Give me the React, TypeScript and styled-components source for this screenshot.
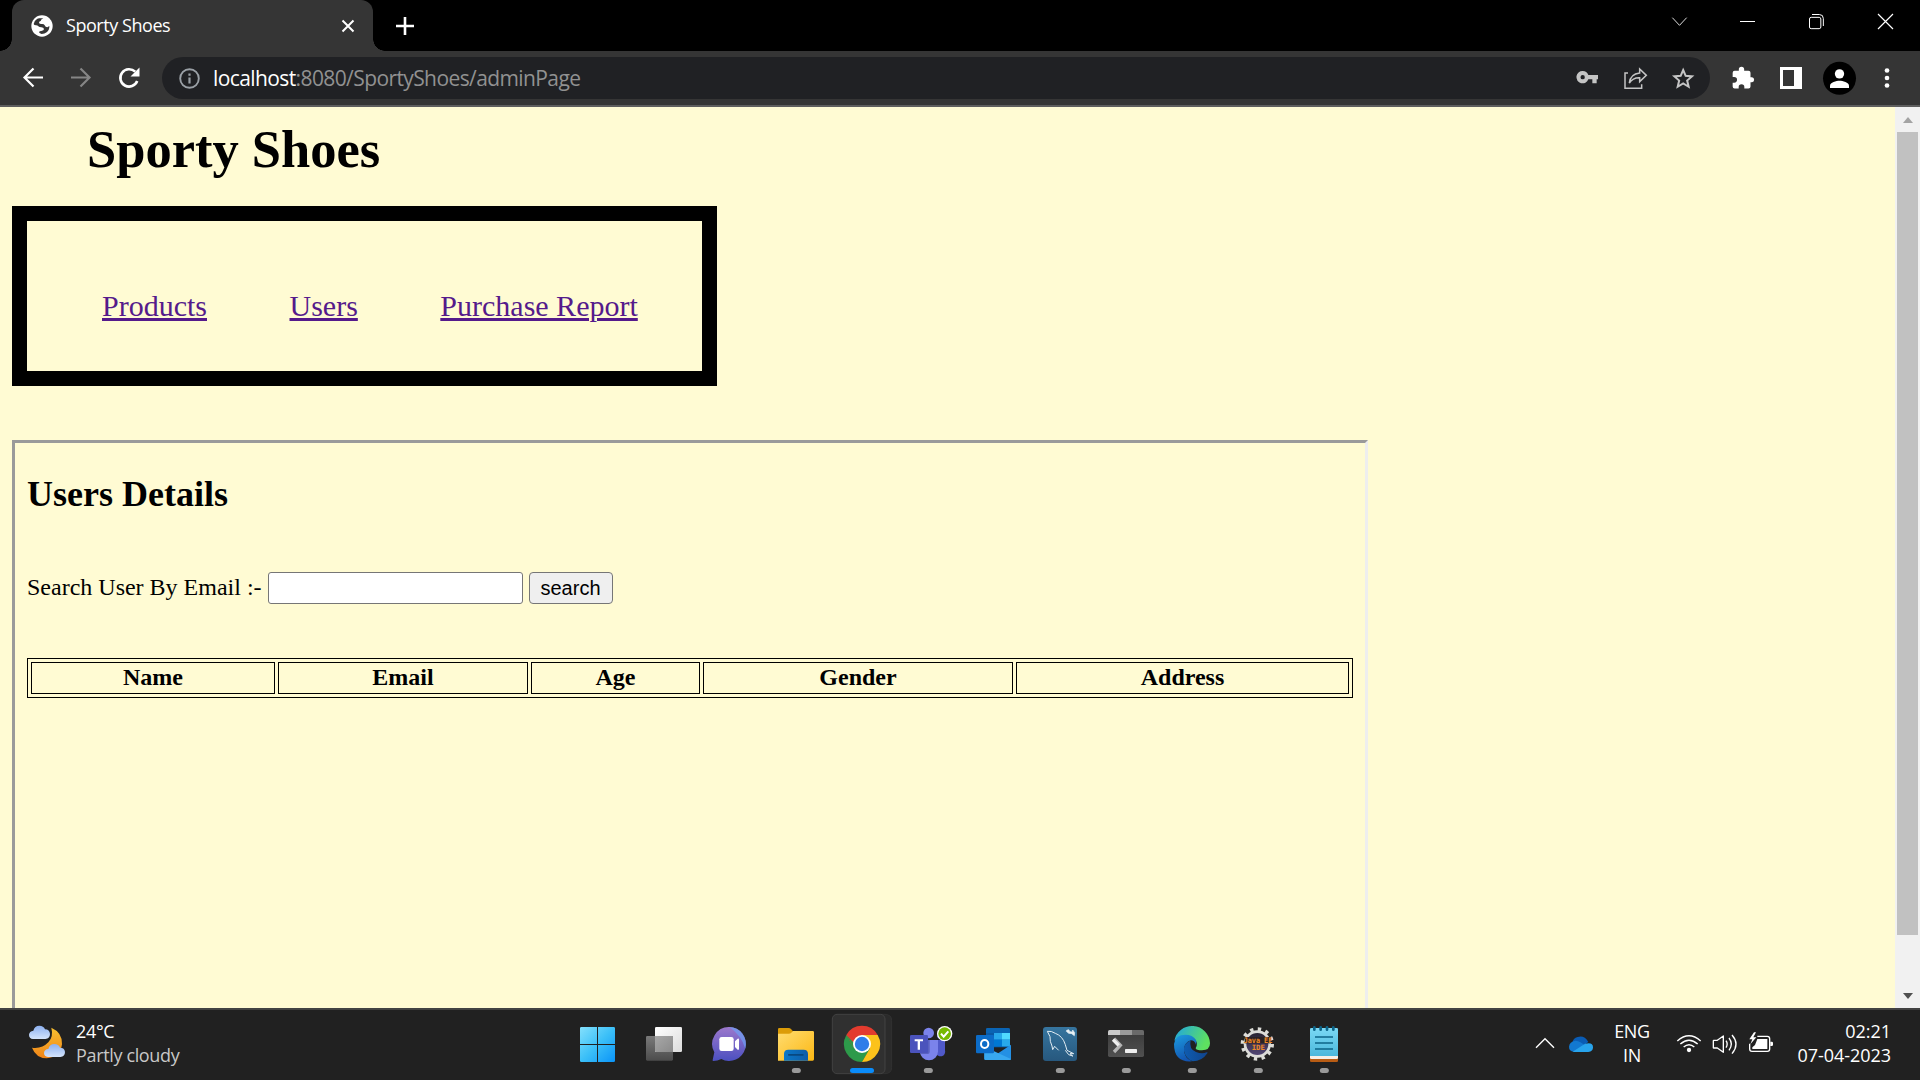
import React from "react";
import styled, { createGlobalStyle, css } from "styled-components";

const ui = `"Open Sans", "Noto Sans", sans-serif`;
const serif = `"Liberation Serif", "Times New Roman", serif`;

const GlobalStyle = createGlobalStyle`
  * { box-sizing: border-box; }
  body { margin: 0; background: #000; overflow: hidden; }
  svg { display: block; flex: none; }
`;

const Screen = styled.div`
  width: 1920px;
  height: 1080px;
  display: flex;
  flex-direction: column;
  overflow: hidden;
`;

/* ---------- Browser chrome ---------- */

const TabStrip = styled.header`
  height: 51px;
  flex: none;
  display: flex;
  background: #000;
  padding-left: 12px;
`;

const Tab = styled.div`
  position: relative;
  width: 361px;
  height: 51px;
  display: flex;
  align-items: center;
  padding: 0 13px 0 19px;
  background: #353535;
  border-radius: 12px 12px 0 0;
  &::before,
  &::after {
    content: "";
    position: absolute;
    bottom: 0;
    width: 12px;
    height: 12px;
  }
  &::before {
    left: -12px;
    background: radial-gradient(circle at 0 0, transparent 11.5px, #353535 12px);
  }
  &::after {
    right: -12px;
    background: radial-gradient(circle at 100% 0, transparent 11.5px, #353535 12px);
  }
`;

const TabTitle = styled.span`
  flex: 1;
  margin-left: 13px;
  padding-bottom: 1px;
  font: 18px/24px ${ui};
  letter-spacing: -0.45px;
  color: #fff;
`;

const NewTab = styled.div`
  width: 64px;
  display: flex;
  align-items: center;
  justify-content: center;
`;

const WindowControls = styled.div`
  margin-left: auto;
  display: flex;
`;

const Toolbar = styled.nav`
  height: 56px;
  flex: none;
  display: flex;
  align-items: flex-start;
  padding: 0 9px;
  background: #353535;
  border-bottom: 2px solid #5e5e5e;
`;

const Omnibox = styled.div`
  flex: 1;
  height: 42px;
  margin: 6px 9px 0 9px;
  padding: 0 3px 0 17px;
  display: flex;
  align-items: center;
  overflow: hidden;
  border-radius: 21px;
  background: #202124;
`;

const Url = styled.span`
  flex: 1;
  margin-left: 13px;
  font: 21px/28px ${ui};
  letter-spacing: -0.6px;
  color: #919191;
  b {
    font-weight: 400;
    color: #fff;
  }
`;

/* ---------- Page ---------- */

const Viewport = styled.div`
  height: 901px;
  flex: none;
  display: flex;
  overflow: hidden;
  background: #fffbd3;
`;

const Page = styled.main`
  flex: 1;
  padding: 12px 12px 0;
  font-family: ${serif};
  color: #000;
`;

const Title = styled.h1`
  margin: 0 0 27px 75px;
  font-size: 52.5px;
  line-height: 60px;
`;

const Menu = styled.div`
  width: 705px;
  height: 180px;
  border: 15px solid #000;
  padding: 67px 0 0 75px;
  display: flex;
  gap: 82.5px;
`;

const MenuLink = styled.a`
  font-size: 30px;
  line-height: 36px;
  color: #551a8b;
  text-decoration: underline;
  text-decoration-thickness: 3px;
  text-underline-offset: 2px;
`;

const Frame = styled.section`
  width: 1356px;
  height: 700px;
  margin-top: 54px;
  padding: 30px 12px 0;
  border: 3px solid;
  border-color: #9a9a9a #eee #eee #9a9a9a;
`;

const SubTitle = styled.h2`
  margin: 0;
  font-size: 36px;
  line-height: 42px;
`;

const SearchRow = styled.form`
  margin-top: 57px;
  height: 32px;
  display: flex;
  align-items: flex-start;
  gap: 6px;
`;

const Label = styled.label`
  width: 235px;
  font-size: 24px;
  line-height: 30px;
  white-space: nowrap;
`;

const Input = styled.input`
  width: 255px;
  height: 32px;
  padding: 0 3px;
  border: 1px solid #767676;
  border-radius: 3px;
  background: #fff;
  outline: none;
`;

const Button = styled.button`
  width: 84px;
  height: 32px;
  padding: 0 1px 1px 0;
  border: 1px solid #767676;
  border-radius: 4px;
  background: #efefef;
  color: #000;
  font: 20px/28px "Liberation Sans", Arial, sans-serif;
`;

const Table = styled.table`
  width: 1326px;
  height: 40px;
  margin-top: 54px;
  table-layout: fixed;
  border: 1px solid #000;
  border-spacing: 3px;
`;

const Th = styled.th<{ $w: number }>`
  width: ${(p) => p.$w}px;
  height: 32px;
  padding: 0 0 2px;
  border: 1px solid #000;
  font-size: 24px;
  line-height: 28px;
`;

const Scrollbar = styled.aside`
  width: 25px;
  display: flex;
  flex-direction: column;
  align-items: center;
  background: #f1f1f1;
`;

const Thumb = styled.div`
  width: 21px;
  height: 803px;
  background: #c1c1c1;
`;

const Arrow = styled.div<{ $down?: boolean }>`
  width: 0;
  height: 0;
  border: 5.5px solid transparent;
  ${(p) =>
    p.$down
      ? css`
          margin-top: 58px;
          border-top: 6px solid #505050;
          border-bottom: 0;
        `
      : css`
          margin: 10px 0 9px;
          border-bottom: 6px solid #a3a3a3;
          border-top: 0;
        `}
`;

/* ---------- Taskbar ---------- */

const Taskbar = styled.footer`
  flex: 1;
  display: flex;
  background: #212121;
  border-top: 2px solid #424242;
`;

const Weather = styled.div`
  width: 565px;
  display: flex;
  padding-left: 25px;
`;

const Lines = styled.div<{ $align?: string; $w?: number; $ml?: number; $sp?: number }>`
  width: ${(p) => (p.$w ? `${p.$w}px` : "auto")};
  margin-left: ${(p) => p.$ml ?? 0}px;
  padding-top: 9px;
  display: flex;
  flex-direction: column;
  text-align: ${(p) => p.$align ?? "left"};
  white-space: nowrap;
  font: 18px/24px ${ui};
  letter-spacing: ${(p) => p.$sp ?? -0.35}px;
  color: #fff;
`;

const Muted = styled.span`
  color: #c8c8c8;
`;

const Apps = styled.div`
  display: flex;
  width: 792px;
`;

const Tray = styled.div`
  flex: 1;
  display: flex;
  padding: 0 29px 0 173px;
`;

const TrayIcons = styled.div`
  display: flex;
  gap: 4px;
  margin-left: 6px;
`;

type BoxProps = { x: number; y?: number; w?: number; h?: number; children: React.ReactNode };

/* Icons are drawn on a grid of three units per pixel. */
const Glyph = ({ x, y = 30, w = 198, h = 210, children }: BoxProps) => (
  <svg width={w / 3} height={h / 3} viewBox={`${x} ${y} ${w} ${h}`} fill="none">
    {children}
  </svg>
);

const Running = ({ cx }: { cx: number }) => (
  <rect x={cx - 13.5} y="204" width="27" height="15" rx="7.5" fill="#9a9a9a" />
);

const gradient = (id: string, a: string, b: string, x2 = 0, y2 = 1) => (
  <linearGradient id={id} x1="0" y1="0" x2={x2} y2={y2}>
    <stop stopColor={a} />
    <stop offset="1" stopColor={b} />
  </linearGradient>
);

const TaskIcons = () => (
  <Apps>
    <Glyph x={15}>
      <defs>
        <linearGradient id="win" gradientUnits="userSpaceOnUse" x1="60" y1="81" x2="165" y2="186">
          <stop stopColor="#84e0fc" />
          <stop offset=".5" stopColor="#3cc0f8" />
          <stop offset="1" stopColor="#0a94f8" />
        </linearGradient>
      </defs>
      <path
        fill="url(#win)"
        d="M64 81h47v51H60V85q0-4 4-4zM114 81h47q4 0 4 4v47h-51zM60 135h51v51H64q-4 0-4-4zM114 135h51v47q0 4-4 4h-47z"
      />
    </Glyph>
    <Glyph x={213}>
      <defs>
        {gradient("tv1", "#ffffff", "#dcdcdc", 1)}
        {gradient("tv2", "#7a7a7a", "#4c4c4c")}
        {gradient("tv3", "#a8a8a8", "#8a8a8a", 1)}
      </defs>
      <rect x="258" y="108" width="81" height="74" rx="4" fill="url(#tv2)" />
      <rect x="285" y="81" width="81" height="75" rx="4" fill="url(#tv1)" />
      <path d="M285 108h54v48h-50q-4 0-4-4z" fill="url(#tv3)" />
    </Glyph>
    <Glyph x={411}>
      <defs>{gradient("chat", "#9c78cc", "#4c50c0")}</defs>
      <path d="M508 81a50 51 0 1 1-24 96q-12 6-24 6-3 0-2-3l5-23a50 51 0 0 1 45-76z" fill="url(#chat)" />
      <path d="M508 81a50 51 0 0 1 48 65q-12-40-48-65z" fill="#6f9cf0" opacity=".75" />
      <rect x="478" y="111" width="43" height="42" rx="7" fill="#fff" />
      <path d="M525 124l8-8q4-2 4 3v27q0 5-4 3l-8-8z" fill="#fff" />
    </Glyph>
    <Glyph x={609}>
      <defs>
        {gradient("fold", "#ffdc70", "#fcb814", 1)}
        {gradient("fold2", "#0a78c8", "#0f5ca8", 1, 0)}
      </defs>
      <path d="M654 88q0-4 4-4h28q4 0 7 3l6 7v14h-45z" fill="#dc9c08" />
      <path d="M654 101h32q5 0 8-3l5-5h59q4 0 4 4v81q0 4-4 4H654z" fill="url(#fold)" />
      <path d="M672 182v-20q0-13 13-13h46q13 0 13 13v20z" fill="url(#fold2)" />
      <rect x="684" y="162" width="47" height="5" rx="2" fill="#084880" />
      <Running cx={709} />
    </Glyph>
    <Glyph x={807}>
      <path d="M960 43h15q20 1 20 18v142q0 17-20 18h-15z" fill="#2b2b2b" stroke="#363636" strokeWidth="2" />
      <rect x="817" y="43" width="158" height="178" rx="14" fill="#303030" stroke="#424242" strokeWidth="3" />
      <path d="M906 132L859.2 105A54 54 0 0 0 906 186l24-40z" fill="#2d9a4a" />
      <path d="M906 105h47A54 54 0 0 1 906 186l24-41z" fill="#fcc21b" />
      <path d="M859 105A54 54 0 0 1 953 105H906l-24 40z" fill="#e33b2e" />
      <path d="M859 105l24 41 10-5z" fill="#2d9a4a" />
      <circle cx="906" cy="132" r="27" fill="#fff" />
      <circle cx="906" cy="132" r="21.5" fill="#2f7de9" />
      <rect x="870" y="204" width="72" height="15" rx="7.5" fill="#0a8cfa" />
    </Glyph>
    <Glyph x={1005}>
      <circle cx="1106" cy="99" r="16" fill="#7b83eb" />
      <circle cx="1143" cy="105" r="12" fill="#5059c9" />
      <path d="M1128 120h27v31a14 14 0 0 1-27 8z" fill="#5059c9" />
      <path d="M1080 120h54v34a27 27 0 0 1-54 0z" fill="#7b83eb" />
      <path d="M1080 120h29v36q0 6-6 6h-22z" fill="#5a62c0" />
      <rect x="1050" y="105" width="54" height="54" rx="4" fill="#4b53bc" />
      <path d="M1064 118h25v6h-9v25h-7v-25h-9z" fill="#fff" />
      <circle cx="1154" cy="101" r="23" fill="#fff" />
      <circle cx="1154" cy="101" r="19" fill="#76b900" />
      <path d="M1143 101l8 9 14-16" stroke="#fff" strokeWidth="6" />
      <Running cx={1105} />
    </Glyph>
    <Glyph x={33}>
      <path d="M108 88q0-4 4-4h63q5 0 5 4v54h-72z" fill="#0a64b4" />
      <path d="M132 99h24v20h-24z" fill="#28a8ea" />
      <path d="M156 99h24v20h-24z" fill="#50d9ff" />
      <path d="M132 119h24v20h-24z" fill="#0078d4" />
      <path d="M156 119h24v20h-24z" fill="#28a8ea" />
      <path d="M108 99h24v40h-24z" fill="#0a5aa5" />
      <path d="M103 140l38 22 42-28v42q0 4-4 4h-72q-4 0-4-4z" fill="#2490e4" />
      <path d="M103 140v36q0 4 4 4h72q3 0 4-3z" fill="#38a8f0" />
      <rect x="78" y="105" width="54" height="55" rx="4" fill="#0c6cc8" />
      <ellipse cx="104" cy="132" rx="11" ry="12" stroke="#fff" strokeWidth="6" />
    </Glyph>
    <Glyph x={231}>
      <defs>{gradient("sql", "#36759f", "#27587e")}</defs>
      <rect x="279" y="81" width="102" height="102" rx="9" fill="url(#sql)" />
      <path
        d="M292 94q12-2 24 6 22 8 30 34l5 17 20 10-11 0 9 8M292 94l8 16q-1 14 6 28l2 11 6-10 12 12M346 151l10 13 12 4"
        stroke="#e4eef4"
        strokeWidth="3"
      />
      <path d="M350 91l6-2 4 6 7 1 1-6 6 8-1 9-8-6-9-1-7-6z" fill="#e8f0f4" stroke="#e8f0f4" strokeWidth="2" />
      <Running cx={331} />
    </Glyph>
    <Glyph x={429}>
      <defs>{gradient("term", "#3a3a3a", "#505050")}</defs>
      <rect x="474" y="90" width="108" height="81" rx="5" fill="url(#term)" />
      <path d="M479 90h31v15h-36V95q0-5 5-5z" fill="#cacaca" />
      <path d="M510 90h36v15h-36z" fill="#9a9a9a" />
      <path d="M546 90h31q5 0 5 5v10h-36z" fill="#6a6a6a" />
      <path d="M492 116l19 20-19 20" stroke="#b4b4b4" strokeWidth="10" />
      <path d="M489 119l17 17" stroke="#eee" strokeWidth="10" />
      <rect x="525" y="147" width="36" height="12" rx="2" fill="#eee" />
      <Running cx={529} />
    </Glyph>
    <Glyph x={627}>
      <defs>
        {gradient("edge1", "#1ea4e4", "#5ee060", 1, 0.35)}
        {gradient("edge2", "#1c9ce0", "#1254b0", 0.4, 1)}
        {gradient("edge3", "#0f5cb0", "#10448c", 1, 0)}
      </defs>
      <path d="M673 122A54 54 0 0 1 780 130q0 21-24 21-18 0-19-6 0-2 3-7 3-9-3-17-10-12-28-12-22 0-36 13z" fill="url(#edge1)" />
      <path d="M672 132q4-28 34-28 22 0 32 16 3 8 0 14-4-13-16-13-20 8-20 28 0 24 24 35-54 4-54-52z" fill="url(#edge2)" />
      <path d="M722 121q-22 10-20 32 4 22 26 31 28 0 44-24 2-4-2-3-14 6-32-1-22-8-16-35z" fill="url(#edge3)" />
      <Running cx={727} />
    </Glyph>
    <Glyph x={825}>
      <defs>{gradient("java", "#26222e", "#544878")}</defs>
      <circle cx="922" cy="132" r="44" stroke="#dcdcd8" strokeWidth="12" strokeDasharray="10 13.04" />
      <circle cx="922" cy="132" r="37" fill="url(#java)" stroke="#dcdcd8" strokeWidth="8" />
      <rect x="884" y="111" width="78" height="19" fill="#2a2224" />
      <text x="924" y="128" textAnchor="middle" textLength="86" lengthAdjust="spacingAndGlyphs" fontFamily="DejaVu Sans Mono, monospace" fontWeight="700" fontSize="23" fill="#f08a24">
        Java EE
      </text>
      <text x="925" y="150" textAnchor="middle" fontFamily="DejaVu Sans Mono, monospace" fontWeight="700" fontSize="22" fill="#f08a24">
        IDE
      </text>
      <Running cx={925} />
    </Glyph>
    <Glyph x={1023}>
      <defs>{gradient("note", "#7ad8f4", "#4cb8dc")}</defs>
      <path d="M1080 168h84v14q0 4-4 4h-76q-4 0-4-4z" fill="#b85c14" />
      <path d="M1080 160h84v13q0 4-4 4h-76q-4 0-4-4z" fill="#f6efe6" />
      <path d="M1080 88q0-4 4-4h76q4 0 4 4v80h-84z" fill="url(#note)" />
      {[1093, 1112, 1131, 1150].map((x) => (
        <rect key={x} x={x - 4} y="78" width="8" height="15" rx="4" fill="#0c6488" />
      ))}
      <path d="M1095 111h54M1095 129h54M1095 147h54" stroke="#0c6488" strokeWidth="5" />
      <Running cx={1123} />
    </Glyph>
  </Apps>
);

const ToolIcon = (p: { x: number; children: React.ReactNode }) => (
  <Glyph x={p.x} y={153} w={144} h={162}>
    {p.children}
  </Glyph>
);

const columns: [string, number][] = [
  ["Name", 244],
  ["Email", 250],
  ["Age", 169],
  ["Gender", 310],
  ["Address", 333],
];

export default function App() {
  return (
    <Screen>
      <GlobalStyle />
      <TabStrip>
        <Tab>
          <Glyph x={21} y={15} w={66} h={66}>
            <circle cx="54" cy="48" r="32" fill="#fff" />
            <path
              fill="#353535"
              d="M58 25q-8 3-8 8-5 1-5 5 1 4 7 4 8-1 10 4 2 6 8 6l6-4q1 11-8 19-6 5-15 5-6-1-8-5 1-4 7-4 8-1 8-6-1-5-8-5-6 0-9-3-2-3-7-3-6 0-7-4 1-10 11-16 4-2 8-1z"
            />
          </Glyph>
          <TabTitle>Sporty Shoes</TabTitle>
          <svg width="24" height="24" viewBox="0 0 24 24" stroke="#fff" strokeWidth="2">
            <path d="M6.500 6.500l11 11M17.500 6.500l-11 11" />
          </svg>
        </Tab>
        <NewTab>
          <svg width="24" height="24" viewBox="0 0 24 24" stroke="#fff" strokeWidth="2.6">
            <path d="M12 3v18M3 12h18" />
          </svg>
        </NewTab>
        <WindowControls>
          <Glyph x={312} y={0} w={207} h={153}>
            <path d="M397 53l21.500 23L440 53" stroke="#ddd" strokeWidth="3" />
          </Glyph>
          <Glyph x={519} y={0} w={207} h={153}>
            <path d="M600 64.500h45" stroke="#fff" strokeWidth="3" />
          </Glyph>
          <Glyph x={726} y={0} w={207} h={153}>
            <rect x="808.500" y="52" width="34" height="34" rx="5" stroke="#fff" strokeWidth="3" />
            <path d="M816 43.500h22q12 0 12 12V78" stroke="#fff" strokeWidth="3" />
          </Glyph>
          <Glyph x={933} y={0} w={207} h={153}>
            <path d="M1014 42l45 45M1059 42l-45 45" stroke="#fff" strokeWidth="3.500" />
          </Glyph>
        </WindowControls>
      </TabStrip>

      <Toolbar>
        <svg width="48" height="54" viewBox="0 0 48 54" stroke="#fff" strokeWidth="2.200" fill="none">
          <path d="M34 26.500H15.500M24.500 17.500l-9 9 9 9" />
        </svg>
        <svg width="48" height="54" viewBox="0 0 48 54" stroke="#868686" strokeWidth="2.200" fill="none">
          <path d="M14 26.500H32.500M23.500 17.500l9 9-9 9" />
        </svg>
        <svg width="48" height="54" viewBox="0 0 48 54" fill="none">
          <path d="M32.200 30a8.700 8.700 0 1 1-2-9.300" stroke="#fff" strokeWidth="2.600" />
          <path d="M34.500 16.500v9h-9z" fill="#fff" />
        </svg>
        <Omnibox>
          <svg width="21" height="21" viewBox="0 0 21 21" fill="none" stroke="#9aa0a6">
            <circle cx="10.500" cy="10.500" r="9.300" strokeWidth="1.900" />
            <path d="M10.500 9.500v6M10.500 5.500v2.200" strokeWidth="2.200" />
          </svg>
          <Url>
            <b>localhost</b>:8080/SportyShoes/adminPage
          </Url>
          <ToolIcon x={69}>
            <path
              d="M128 213a18.500 18.500 0 1 0 17 25h12v12h13v-12h4v-13h-29a18.500 18.500 0 0 0-17-12zm0 12a6.500 6.500 0 1 1 0 13 6.500 6.500 0 0 1 0-13z"
              fill="#c4c4c4"
              fillRule="evenodd"
            />
          </ToolIcon>
          <ToolIcon x={213}>
            <path d="M264 219h-9v46h50v-12" stroke="#c4c4c4" strokeWidth="4.500" />
            <path d="M268 249q3-27 31-30v-12l20 19-20 19v-12q-20-1-31 16z" stroke="#c4c4c4" strokeWidth="4.500" />
          </ToolIcon>
          <ToolIcon x={357}>
            <path
              d="M429.500 208l7.500 17.500 19 1.700-14.500 12.600 4.400 18.500-16.400-9.900-16.400 9.900 4.400-18.500L403 227.200l19-1.700z"
              transform="translate(0 2)"
              stroke="#c4c4c4"
              strokeWidth="6"
            />
          </ToolIcon>
        </Omnibox>
        <ToolIcon x={537}>
          <path
            d="M636 231.500h-4.500v-13q0-6-6-6h-13V208a8 8 0 0 0-16 0v4.500h-12.500q-6 0-6 6V231h4.600a8.500 8.500 0 0 1 0 17H578v11.500q0 6 6 6h12V261a8.500 8.500 0 0 1 17 0v4.500h12.500q6 0 6-6v-13h4.500a7.600 7.600 0 0 0 0-15z"
            fill="#fff"
          />
        </ToolIcon>
        <ToolIcon x={681}>
          <path d="M720 201h66v66h-66zM729 210v48h33v-48z" fill="#fff" fillRule="evenodd" />
        </ToolIcon>
        <ToolIcon x={825}>
          <circle cx="898.500" cy="235" r="49.500" fill="#000" />
          <circle cx="898.500" cy="221.500" r="14" fill="#fff" />
          <path d="M870 264v-7c0-10 19-15 28.500-15S927 247 927 257v7z" fill="#fff" />
        </ToolIcon>
        <ToolIcon x={969}>
          <circle cx="1041" cy="211.500" r="7" fill="#fff" />
          <circle cx="1041" cy="234" r="7" fill="#fff" />
          <circle cx="1041" cy="256.500" r="7" fill="#fff" />
        </ToolIcon>
      </Toolbar>

      <Viewport>
        <Page>
          <Title>Sporty Shoes</Title>
          <Menu>
            <MenuLink>Products</MenuLink>
            <MenuLink>Users</MenuLink>
            <MenuLink>Purchase Report</MenuLink>
          </Menu>
          <Frame>
            <SubTitle>Users Details</SubTitle>
            <SearchRow>
              <Label>Search User By Email :-</Label>
              <Input type="text" />
              <Button type="button">search</Button>
            </SearchRow>
            <Table>
              <thead>
                <tr>
                  {columns.map(([name, w]) => (
                    <Th key={name} $w={w}>
                      {name}
                    </Th>
                  ))}
                </tr>
              </thead>
            </Table>
          </Frame>
        </Page>
        <Scrollbar>
          <Arrow />
          <Thumb />
          <Arrow $down />
        </Scrollbar>
      </Viewport>

      <Taskbar>
        <Weather>
          <Glyph x={75} y={60} w={129} h={210}>
            <defs>
              {gradient("moon", "#f8c030", "#f08418")}
              {gradient("cloud", "#8cb0f0", "#d4e4fc")}
            </defs>
            <path d="M154 113q34 15 32 50-5 38-46 42-32-1-44-32 30 4 49-16 16-17 9-44z" fill="url(#moon)" />
            <path d="M99 147q-12-1-12-13 1-11 13-12 4-15 18-15 13 0 17 11 14 0 15 14 0 13-14 15z" fill="url(#cloud)" />
            <path d="M144 201q-12-1-12-12 1-11 13-12 4-15 18-15 13 0 17 11 14 0 15 13 0 13-14 15z" fill="url(#cloud)" />
          </Glyph>
          <Lines $ml={8}>
            <span>24°C</span>
            <Muted>Partly cloudy</Muted>
          </Lines>
        </Weather>
        <TaskIcons />
        <Tray>
          <Glyph x={90} y={270} w={90}>
            <path d="M108 383l27-27 27 27" stroke="#fff" strokeWidth="4" />
          </Glyph>
          <Glyph x={180} y={270} w={111}>
            <path d="M217 368q2-13 16-17 20-6 32 15l-20 14z" fill="#0a5cb4" />
            <path d="M227 362q15 2 28 15l-34 18q-14-1-14-15 1-15 20-18z" fill="#1278d0" />
            <path d="M218 395l37-24q24-6 24 11 0 13-14 14h-40q-4 0-7-1z" fill="#28a4ec" />
          </Glyph>
          <Lines $w={70} $align="center">
            <span>ENG</span>
            <span>IN</span>
          </Lines>
          <TrayIcons>
            <Glyph x={519} y={270} w={96}>
              <path d="M532 363q35-31 70 0M541 372q26-23 52 0M551 381q16-14 32 0" stroke="#fff" strokeWidth="4.500" />
              <circle cx="567" cy="390" r="6.500" fill="#fff" />
            </Glyph>
            <Glyph x={627} y={270} w={96}>
              <path d="M641 361h11l18-13v49l-18-13h-11q-1 0-1-1v-21q0-1 1-1z" stroke="#fff" strokeWidth="4" strokeLinejoin="round" />
              <path d="M678 362q7 10 0 21M687 354q14 18 0 37M696 345q24 27 0 56" stroke="#fff" strokeWidth="4" />
            </Glyph>
            <Glyph x={735} y={270} w={96}>
              <path d="M772 349h30q7 0 7 7v31q0 7-7 7h-46q-7 0-7-7v-16" stroke="#fff" strokeWidth="4" />
              <path d="M772 357h30v30h-45v-5l8-7z" fill="#fff" />
              <path d="M811 365h4q4 0 4 4v6q0 3-4 3h-4z" fill="#fff" />
              <path d="M762 337l-14 21h9l-6 15 18-21h-9l8-15z" fill="#fff" />
            </Glyph>
          </TrayIcons>
          <Lines $align="right" $w={114} $sp={-0.05}>
            <span>02:21</span>
            <span>07-04-2023</span>
          </Lines>
        </Tray>
      </Taskbar>
    </Screen>
  );
}
